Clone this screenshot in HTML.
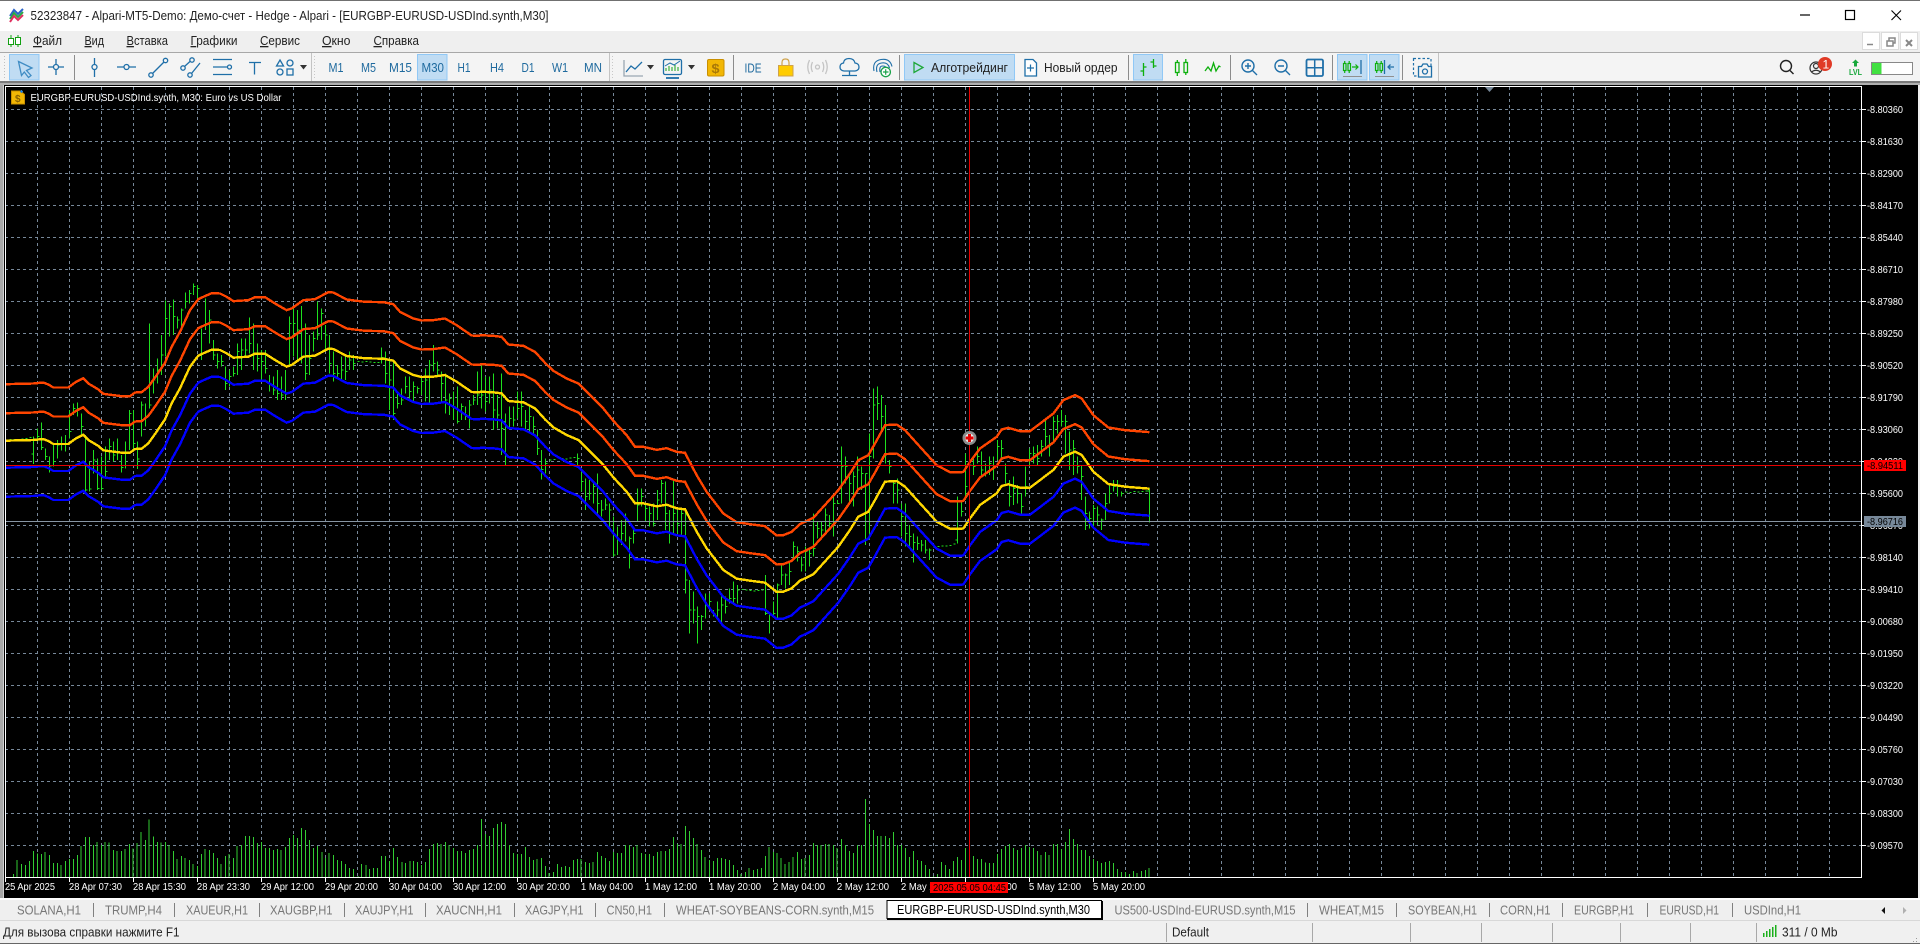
<!DOCTYPE html>
<html lang="ru"><head><meta charset="utf-8"><title>52323847 - Alpari-MT5-Demo</title>
<style>
html,body{margin:0;padding:0;background:#f0f0f0;overflow:hidden}
svg{display:block;font-family:"Liberation Sans","Noto Sans CJK JP",sans-serif}
.t{font-size:13px;fill:#222}
.g{font-size:13px;fill:#777}
.w{font-size:10px;fill:#fff}
.s{font-size:13px;fill:#1f6a9e}
.nv{vector-effect:non-scaling-stroke}
</style></head><body>
<svg width="1920" height="944" viewBox="0 0 1920 944" xmlns="http://www.w3.org/2000/svg">
<defs>
<pattern id="gv" patternUnits="userSpaceOnUse" x="5" y="87" width="32" height="6"><rect width="1" height="3" fill="#778899"/></pattern>
<pattern id="gh" patternUnits="userSpaceOnUse" x="5" y="109" width="6" height="32"><rect width="3" height="1" fill="#778899"/></pattern>
<g id="mid" fill="none" stroke-width="2.4" shape-rendering="crispEdges">
<path class="nv" transform="translate(0,260) scale(.33333)" d="M18 542L100 540L130 537L145 543L160 552L205 552L225 537L250 524L265 540L295 558L310 571L340 575L365 578L390 578L405 567L425 566L445 550L470 515L495 478L515 430L540 385L570 320L595 287L610 280L635 269L660 270L680 280L700 293L745 290L765 281L795 281L830 303L860 320L875 315L910 290L945 287L985 266L1000 267L1040 288L1095 295L1150 296L1180 302L1200 325L1240 345L1265 351L1300 350L1335 345L1370 365L1415 396L1440 397"/>
<path class="nv" transform="translate(480,340) scale(.33333)" d="M0 155L40 157L65 160L85 183L130 187L165 205L195 238L220 262L260 285L295 300L340 345L370 375L400 412L440 455L465 490L490 490L530 499L560 494L590 505L615 508L650 575L680 625L730 690L770 716L810 722L855 728L890 756L910 755L935 745L960 722L1000 703L1075 620L1110 570L1135 530L1165 515L1185 480L1215 425L1250 423L1275 440L1320 490L1370 545L1410 566L1440 566"/>
<path class="nv" transform="translate(800,360) scale(.33333)" d="M480 507L490 505L510 475L540 435L590 400L605 378L625 373L660 383L690 383L760 330L790 290L825 275L845 285L880 335L925 372L975 380L1048 386"/>
</g>
</defs>

<!-- window chrome -->
<rect width="1920" height="944" fill="#f0f0f0"/>
<rect width="1920" height="31" fill="#fff"/>
<rect width="1920" height="1" fill="#707070"/>
<rect y="31" width="1920" height="21" fill="#efefef"/>
<rect y="52" width="1920" height="1" fill="#a8a8a8"/>
<rect y="53" width="1920" height="28" fill="#f4f4f4"/>
<rect y="81" width="1920" height="2" fill="#7a7a7a"/>
<rect y="83" width="1920" height="2" fill="#b0b0b0"/>

<!-- app icon + title -->
<g fill="none" stroke-width="2">
<path d="M10 16L14 10L18 14L23 9" stroke="#2a62c8"/>
<path d="M10 19L14 13L18 17L23 12" stroke="#28a745"/>
<path d="M10 22L14 16L18 20L23 15" stroke="#e03060"/>
</g>
<text class="t" x="30.5" y="20" textLength="518" lengthAdjust="spacingAndGlyphs">52323847 - Alpari-MT5-Demo: Демо-счет - Hedge - Alpari - [EURGBP-EURUSD-USDInd.synth,M30]</text>
<path d="M1800 15h10" stroke="#000" stroke-width="1.2"/>
<rect x="1845.5" y="10.5" width="9" height="9" fill="none" stroke="#000" stroke-width="1.2"/>
<path d="M1891.5 10.5l9.5 9.5M1901 10.5l-9.5 9.5" stroke="#000" stroke-width="1.1"/>

<!-- menu -->
<g fill="none" stroke="#12a012"><path d="M11 35v12M18 35v12"/><rect x="8.5" y="38.5" width="5" height="6" fill="#fff"/><rect x="15.5" y="37.5" width="5" height="7" fill="#fff"/></g>
<text class="t" x="33" y="45" textLength="29" lengthAdjust="spacingAndGlyphs"><tspan text-decoration="underline">Ф</tspan>айл</text>
<text class="t" x="84.5" y="45" textLength="19.5" lengthAdjust="spacingAndGlyphs"><tspan text-decoration="underline">В</tspan>ид</text>
<text class="t" x="126.5" y="45" textLength="41.5" lengthAdjust="spacingAndGlyphs"><tspan text-decoration="underline">В</tspan>ставка</text>
<text class="t" x="190.5" y="45" textLength="47" lengthAdjust="spacingAndGlyphs"><tspan text-decoration="underline">Г</tspan>рафики</text>
<text class="t" x="260" y="45" textLength="40" lengthAdjust="spacingAndGlyphs"><tspan text-decoration="underline">С</tspan>ервис</text>
<text class="t" x="322" y="45" textLength="28.5" lengthAdjust="spacingAndGlyphs"><tspan text-decoration="underline">О</tspan>кно</text>
<text class="t" x="373.5" y="45" textLength="45.5" lengthAdjust="spacingAndGlyphs"><tspan text-decoration="underline">С</tspan>правка</text>
<!-- MDI buttons -->
<g fill="#fff" stroke="#dcdcdc"><rect x="1862.5" y="32.5" width="17" height="17"/><rect x="1881.5" y="32.5" width="17" height="17"/><rect x="1900.5" y="32.5" width="17" height="17"/></g>
<g fill="none" stroke="#888" stroke-width="1.5"><path d="M1867 44.5h6"/><rect x="1887" y="41" width="6" height="5"/><path d="M1889 41v-3h6v5h-2"/><path d="M1906 40l6 6M1912 40l-6 6" stroke-width="2"/></g>

<!-- toolbar separators -->
<g stroke="#8c8c8c"><path d="M74.5 55v25M733.5 55v25M899.5 55v25M1128.5 55v25M1230.5 55v25M1332.5 55v25M1402.5 55v25"/></g>
<g stroke="#c4c4c4"><path d="M311.5 53v28M609.5 53v28M1438.5 53v28"/></g>
<path d="M4.5 56v23" stroke="#c0c0c0" stroke-dasharray="1 2"/><path d="M314.5 56v23M612.5 56v23" stroke="#c8c8c8" stroke-dasharray="1 2"/>

<!-- selected buttons -->
<g fill="#c0dcf3" stroke="#90c8f6"><rect x="9.5" y="54.5" width="29.5" height="25.5"/><rect x="417.5" y="54.5" width="29.5" height="25.5"/><rect x="904.5" y="54.5" width="110" height="25.5"/><rect x="1133.5" y="54.5" width="29" height="25.5"/><rect x="1337.5" y="54.5" width="29.5" height="25.5"/><rect x="1369.5" y="54.5" width="29.5" height="25.5"/></g>

<!-- drawing tools -->
<g fill="none" stroke="#1f6fa8" stroke-width="1.3">
<path d="M18.5 61.5L32 68L26.5 70.5L31 75.5L28.5 77.5L24.3 72L21.5 75.5Z" stroke="#3f8cc4"/>
<path d="M48 67h5.5M58.5 67h5.5M56 59v5.5M56 69.5V75"/><circle cx="56" cy="67" r="2.5"/>
<path d="M94.5 58v6.5M94.5 69.5V77"/><circle cx="94.5" cy="67" r="2.5"/>
<path d="M117 67h7M129 67h7"/><circle cx="126.5" cy="67" r="2.5"/>
<path d="M152.5 73.5L164 62"/><circle cx="151" cy="75" r="2.2"/><circle cx="165.5" cy="60.5" r="2.2"/>
<path d="M184.5 66.5L190.5 61M191.5 73.5L200 63"/><circle cx="183" cy="68" r="2.2"/><circle cx="192" cy="60" r="2.2"/><circle cx="190" cy="75" r="2.2"/>
<path d="M213 59.5h19M213 67h14M213 74.5h19"/><circle cx="229.5" cy="67" r="2"/>
<path d="M249 62.5h12M254.5 62.5V74.5"/>
<path d="M280 60l3.5 6h-7z"/><circle cx="290" cy="63" r="3"/><circle cx="280" cy="72" r="3"/><rect x="287" y="69" width="6" height="6"/>
</g>
<path d="M300 65h7l-3.5 4.5zM647 65h7l-3.5 4.5zM688 65h7l-3.5 4.5z" fill="#333"/>

<!-- timeframes -->
<text class="s" x="328.5" y="72" textLength="15" lengthAdjust="spacingAndGlyphs">M1</text>
<text class="s" x="361" y="72" textLength="15" lengthAdjust="spacingAndGlyphs">M5</text>
<text class="s" x="389" y="72" textLength="23" lengthAdjust="spacingAndGlyphs">M15</text>
<text class="s" x="421.5" y="72" textLength="22.5" lengthAdjust="spacingAndGlyphs">M30</text>
<text class="s" x="457.5" y="72" textLength="13" lengthAdjust="spacingAndGlyphs">H1</text>
<text class="s" x="490" y="72" textLength="14" lengthAdjust="spacingAndGlyphs">H4</text>
<text class="s" x="521.5" y="72" textLength="13" lengthAdjust="spacingAndGlyphs">D1</text>
<text class="s" x="552" y="72" textLength="16" lengthAdjust="spacingAndGlyphs">W1</text>
<text class="s" x="584" y="72" textLength="18" lengthAdjust="spacingAndGlyphs">MN</text>

<!-- chart style icons -->
<g fill="none" stroke="#1f6fa8" stroke-width="1.3">
<path d="M624 60v16h19" stroke="#9aa7b2"/><path d="M626 72l5-6 4 3 7-7"/>
<rect x="663.5" y="59.5" width="18" height="15" rx="1.5"/><path d="M666 78h13" stroke-width="1.8"/>
</g>
<path d="M666 71v-3M669 71v-5M672 71v-4M675 71v-6M678 71v-4" stroke="#16a516"/><path d="M665 66l5-3 4 2 6-4" fill="none" stroke="#1f6fa8"/>
<rect x="707.5" y="59.5" width="16.5" height="16.5" rx="1.5" fill="#f2b705" stroke="#c98f00"/>
<text x="711.5" y="73" font-size="13" font-weight="bold" fill="#a87808" textLength="8" lengthAdjust="spacingAndGlyphs">$</text>
<text x="744.5" y="72.5" font-size="13" fill="#1f6a9e" textLength="17" lengthAdjust="spacingAndGlyphs">IDE</text>
<rect x="778.5" y="65.5" width="14.5" height="10.5" fill="#ffcc00" stroke="#cfa24a"/>
<path d="M782 65.5v-3q0-3.5 3.5-3.5t3.5 3.5v3" fill="none" stroke="#cfa24a" stroke-width="1.2"/>
<g fill="none" stroke="#c4c4c4" stroke-width="1.3"><circle cx="817.5" cy="67" r="2"/><path d="M812.5 62q-2.5 5 0 10M822.5 62q2.5 5 0 10M809.5 60q-3.5 7 0 14M825.5 60q3.5 7 0 14"/></g>
<g fill="none" stroke="#1f6fa8" stroke-width="1.3"><path d="M844 71h11q4-.5 4-4t-4-4q-1-4.5-6-4.5t-5.5 4.5q-3.500.5-3.500 4t4 4zM849.500 71v4M842 75.500h15"/></g>
<g fill="none" stroke="#1f6fa8" stroke-width="1.1"><path d="M874 71q-2-10 7-11.500t11 7M877 72q-2-8 4.500-9t8 5M880 72q-1-6 2.500-6t4 2.500"/></g>
<circle cx="885.7" cy="72" r="4.7" fill="#fff" stroke="#1aa34a" stroke-width="1.3"/><path d="M883 72h5.500M885.700 69.300v5.500" stroke="#1aa34a" stroke-width="1.2"/>
<path d="M914 62.5L923 67.5L914 72.5Z" fill="none" stroke="#1fa83a" stroke-width="1.3"/>
<text class="t" x="931" y="72" textLength="77" lengthAdjust="spacingAndGlyphs">Алготрейдинг</text>
<path d="M1025 59.5h8l3.5 3.5V76h-11.5z" fill="#fff" stroke="#1f6fa8" stroke-width="1.3"/><path d="M1027 68h7M1030.5 64.5v7" stroke="#1f6fa8" stroke-width="1.2"/>
<text class="t" x="1044" y="72" textLength="73.5" lengthAdjust="spacingAndGlyphs">Новый ордер</text>

<g fill="none" stroke="#0db00d" stroke-width="1.3">
<path d="M1143.5 63v13M1143.5 71h-3M1143.5 67h3M1153.5 59v9M1153.5 62h-3M1153.5 66h3"/>
<rect x="1175.5" y="62.5" width="3.5" height="10"/><path d="M1177.3 60v2.5M1177.3 72.5V76"/><rect x="1184" y="62.5" width="3.5" height="10"/><path d="M1185.8 59v3.5M1185.8 72.5V75"/>
<path d="M1205 71l3-4 3 4 2.5-8 2.5 8 3-5 1.5 1"/>
</g>
<g fill="none" stroke="#1f6fa8" stroke-width="1.4">
<circle cx="1248" cy="66" r="6"/><path d="M1252.5 70.5L1257 75M1245 66h6M1248 63v6"/>
<circle cx="1281" cy="66" r="6"/><path d="M1285.5 70.5L1290 75M1278 66h6"/>
<rect x="1306.5" y="59.5" width="16.5" height="16.5" rx="1.5" stroke-width="1.8"/><path d="M1306.5 67.7h16.5M1314.7 59.5V76" stroke-width="1.5"/>
</g>
<g fill="none" stroke="#0db00d" stroke-width="1.2">
<rect x="1343.5" y="63.5" width="2.5" height="7"/><path d="M1344.7 61v2.5M1344.7 70.5V73"/><rect x="1348" y="63.5" width="2.5" height="7"/><path d="M1349.2 61v2.5M1349.2 70.5V73"/><path d="M1352 67h6M1355.5 64.5L1358 67L1355.5 69.5"/>
<rect x="1375.5" y="63.5" width="2.5" height="7"/><path d="M1376.7 61v2.5M1376.7 70.5V73"/><rect x="1380" y="63.5" width="2.5" height="7"/><path d="M1381.2 61v2.5M1381.2 70.5V73"/>
</g>
<g fill="none" stroke="#1f6fa8" stroke-width="1.3"><path d="M1361 60v14M1384.5 60v14M1388 67h6M1390.5 64.5L1388 67L1390.5 69.5"/></g>
<path d="M1343 76.5h19M1375 76.5h19" stroke="#909090" stroke-width="1"/>
<rect x="1413.5" y="58.5" width="17.5" height="17.5" fill="none" stroke="#1f6fa8" stroke-dasharray="2.5 2" stroke-width="1.2"/>
<path d="M1418.5 66.5h3l1.500-2.500h4l1.500 2.500h3v10.500h-13z" fill="#f4f4f4" stroke="#1f6fa8" stroke-width="1.3"/><circle cx="1425" cy="71.5" r="2.5" fill="none" stroke="#1f6fa8" stroke-width="1.3"/>

<!-- right side icons -->
<g fill="none" stroke="#222" stroke-width="1.4"><circle cx="1786" cy="66" r="5.5"/><path d="M1790 70.5L1793.5 74"/></g>
<g fill="none" stroke="#333" stroke-width="1.2"><circle cx="1816" cy="68" r="6"/><circle cx="1816" cy="66" r="2.5"/><path d="M1811.5 72q4.5-3.5 9 0"/></g>
<circle cx="1825" cy="64" r="7" fill="#e03a26"/>
<text x="1822.5" y="68.5" font-size="12" fill="#fff">1</text>
<path d="M1855.5 59.5l3.5 3.5h-2v3.5h-3V63h-2z" fill="#18a83c"/>
<text x="1849" y="75" font-size="8.5" fill="#18a83c" font-weight="bold" textLength="13" lengthAdjust="spacingAndGlyphs">LVL</text>
<rect x="1871.5" y="62.5" width="41" height="12" fill="#fff" stroke="#888"/>
<rect x="1872" y="63" width="9.5" height="11" fill="#41e041"/>

<!-- chart -->
<rect x="0" y="85" width="3" height="813" fill="#a8a8a8"/>
<rect x="3" y="85" width="1" height="813" fill="#d0d0d0"/>
<rect x="4" y="85" width="1914" height="813" fill="#000"/>
<rect x="6" y="87" width="1855" height="790" fill="url(#gv)"/>
<rect x="6" y="87" width="1855" height="790" fill="url(#gh)"/>

<!-- volumes -->
<g fill="none" stroke="#32cd32" stroke-width="1" shape-rendering="crispEdges">
<path class="nv" transform="translate(0,780) scale(.38265,.33333)" d="M35 282V291M45 240V291M56 252V291M66 255V291M77 243V291M87 213V291M98 220V291M108 222V291M118 216V291M129 225V291M140 249V291M150 249V291M160 255V291M171 243V291M181 237V291M192 237V291M202 225V291M212 198V291M223 171V291M234 171V291M244 195V291M254 186V291M265 195V291M275 186V291M285 188V291M296 210V291M306 213V291M317 213V291M327 207V291M338 192V291M348 205V291M358 189V291M369 156V291M380 180V291M390 118V291M401 170V291M411 186V291M421 188V291M432 186V291M442 195V291M453 213V291M463 237V291M474 228V291M484 234V291M495 240V291M505 252V291M516 258V291M526 222V291M536 207V291M547 210V291M558 219V291M568 234V291M578 252V291M589 228V291M599 222V291M610 234V291M620 198V291M631 195V291M641 168V291M652 168V291M662 171V291M673 189V291M683 186V291M694 204V291M704 204V291M715 210V291M725 207V291M735 210V291M746 201V291M757 174V291M767 165V291M778 174V291M788 144V291M799 150V291M809 180V291M819 204V291M830 198V291M841 216V291M850 234V291M860 219V291M871 225V291M882 240V291M893 243V291M903 252V291M914 264V291M924 267V291M935 288V291M945 252V291M956 255V291M966 267V291M976 264V291M987 264V291M997 228V291M1007 228V291M1018 243V291M1028 204V291M1039 231V291M1050 246V291M1060 249V291M1071 243V291M1081 243V291M1091 246V291M1102 255V291M1112 246V291M1122 207V291M1133 192V291M1143 189V291M1153 192V291M1164 186V291M1174 195V291M1185 204V291M1195 213V291M1206 213V291M1217 219V291M1227 210V291M1238 207V291M1248 195V291M1258 117V291M1269 162V291M1279 168V291M1290 144V291M1300 132V291M1310 126V291M1321 132V291M1332 195V291M1342 219V291M1352 222V291M1363 222V291M1373 201V291M1384 231V291M1394 240V291M1404 237V291M1415 234V291M1425 258V291M1435 279V291M1446 276V291M1457 252V291M1467 261V291M1478 258V291M1488 261V291M1499 240V291M1509 237V291M1519 237V291M1530 246V291M1540 249V291M1550 246V291M1561 216V291"/>
<path class="nv" transform="translate(600,780) scale(.38265,.33333)" d="M4 228V291M14 234V291M25 243V291M35 216V291M46 219V291M56 219V291M66 195V291M77 195V291M87 201V291M97 195V291M108 219V291M119 222V291M129 222V291M140 228V291M150 216V291M160 213V291M171 213V291M181 207V291M192 171V291M202 192V291M212 192V291M223 138V291M234 153V291M244 174V291M254 192V291M265 210V291M275 231V291M286 240V291M296 243V291M307 234V291M317 234V291M328 237V291M338 240V291M349 255V291M359 270V291M369 282V291M380 276V291M390 264V291M401 270V291M411 267V291M422 264V291M432 228V291M442 201V291M453 216V291M463 219V291M473 234V291M484 252V291M494 246V291M505 231V291M516 216V291M526 237V291M536 234V291M547 225V291M558 189V291M568 195V291M578 195V291M589 192V291M599 192V291M610 195V291M620 204V291M631 177V291M641 195V291M652 213V291M662 219V291M673 195V291M683 195V291M694 57V291M704 132V291M715 150V291M725 168V291M735 168V291M746 168V291M757 174V291M767 156V291M778 195V291M788 195V291M799 204V291M809 231V291M819 213V291M830 240V291M840 243V291M850 255V291M861 267V291M871 288V291M882 282V291M893 246V291M903 255V291M913 267V291M924 243V291M934 231V291M945 240V291M955 204V291M966 210V291M976 228V291M987 237V291M997 237V291M1007 248V291M1018 249V291M1028 249V291M1039 222V291M1049 207V291M1060 198V291M1070 192V291M1081 204V291M1091 210V291M1102 204V291M1112 195V291M1122 201V291M1133 204V291M1143 213V291M1153 225V291M1164 216V291M1174 225V291M1185 192V291M1195 192V291M1206 207V291M1216 186V291M1227 147V291M1237 177V291M1248 192V291M1258 210V291M1269 210V291M1279 228V291M1290 237V291M1300 243V291M1310 249V291M1321 246V291M1331 243V291M1342 249V291M1352 267V291M1363 276V291M1373 276V291M1384 282V291M1394 273V291M1404 279V291M1415 273V291M1425 270V291M1435 264V291"/>
</g>

<!-- price bars -->
<g fill="none" stroke="#1ee01e" stroke-width="1" shape-rendering="crispEdges">
<path class="nv" transform="translate(0,260) scale(.33333)" d="M28 539h6M40 538h6M52 538h6M64 537h6M76 535h6M88 533h6M100 530V612m0-30h-6M112 505V545m0-15h6M124 487V570m0-8h6M136 565V600m0-10h6M148 590V638m0-20h6M160 555V620m0-15h6M172 540V595m0-40h6M184 530V572m0-18h6M196 525V575m0-25h6M208 450V535m0-20h6M220 430V465m0-20h6M232 428V470m0-25h6M244 460V530m0-30h6M256 525V700m0-10h6M268 605V695m0-8h6M280 570V640m0-40h6M292 595V690m0-5h6M304 590V690m0-5h6M316 560V650m0-15h6M328 535V600m0-40h6M340 545V605m0-20h6M352 535V600m0-25h6M364 585V637m0-15h6M376 545V625m0-8h6M388 450V570m0-110h6M400 450V565m0-15h6M412 545V627m0-30h6M424 425V530m0-95h6M436 430V500m0-30h6M448 190V445m0-10h6M460 325V400m0-40h6M472 295V370m0-40h6M484 225V345m0-60h6M496 122V290m0-115h6M508 130V230m0-90h6M520 118V225m0-55h6M532 170V205m0-25h6M544 145V200m0-50h6M556 98V145m0-20h6M568 90V130m0-30h6M580 70V105m0-25h6M592 75V115m0-30h6M604 205V300m0-20h6M616 115V210m0-20h6M628 150V250m0-70h6M640 240V300m0-15h6M652 280V325m0-20h6M664 285V320m0-15h6M676 320V390m0-20h6M688 330V380m0-30h6M700 320V350m0-10h6M712 250V345m0-70h6M724 235V330m0-60h6M736 235V290m0-20h6M748 172V280m0-30h6M760 190V330m0-50h6M772 250V335m0-40h6M784 270V360m0-55h6M796 270V340m0-15h6M808 345V395m0-25h6M820 350V405m0-15h6M832 330V420m0-20h6M844 350V420m0-15h6M856 330V420m0-20h6M868 170V320m0-130h6M880 145V290m0-100h6M892 150V300m0-90h6M904 138V310m0-100h6M916 190V360m0-20h6M928 225V345m0-50h6M940 215V275m0-40h6M952 125V240m0-15h6M964 145V240m0-80h6M976 195V275m0-50h6M988 225V340m0-30h6M1000 275V365m0-25h6M1012 315V355m0-15h6M1024 290V360m0-30h6M1036 290V360m0-25h6M1048 275V330m0-30h6M1060 285V330m0-20h6M1072 304h6M1084 306h6M1096 305h6M1108 306h6M1120 308h6M1132 307h6M1145 262V310m0-18h6M1157 275V370m0-30h6M1169 300V450m0-90h6M1181 300V480m0-20h6M1193 400V445m0-15h6M1205 385V435m0-15h6M1217 350V400m0-20h6M1229 350V415m0-20h6M1241 365V425m0-45h6M1253 380V400m0-15h6M1265 350V405m0-40h6M1277 325V425m0-65h6M1289 300V430m0-115h6M1301 255V335m0-25h6M1313 305V350m0-20h6M1325 335V430m0-60h6M1337 340V460m0-40h6M1349 400V465m0-50h6M1361 395V480m0-40h6M1373 380V490m0-5h6M1385 430V480m0-40h6M1397 440V480m0-10h6M1409 420V505m0-70h6M1421 405V435m0-15h6M1433 335V435m0-30h6"/>
<path class="nv" transform="translate(480,340) scale(.33333)" d="M5 75V205m0-40h6M17 110V215m0-30h6M29 110V190m0-40h6M41 100V270m0-60h6M53 165V265m0-40h6M65 100V345m0-80h6M77 220V375m0-130h-6M89 200V265m0-30h6M101 200V260m0-20h6M113 155V235m0-30h6M125 155V260m0-60h6M137 210V275m0-30h6M149 200V280m0-50h6M161 230V280m0-20h6M173 268V345m0-20h6M185 330V418m0-30h6M197 355V400m0-30h6M209 360h6M221 358h6M233 354h6M245 356h6M257 357h6M269 354h6M281 353h6M293 340V375m0-20h6M305 385V455m0-30h6M317 415V510m0-40h6M329 420V480m0-20h6M341 430V490m0-50h6M353 400V520m0-30h6M365 480V530m0-20h6M377 475V510m0-15h6M389 490V560m0-50h6M401 530V650m0-5h6M413 560V645m0-50h6M425 540V615m0-35h6M437 520V605m0-60h6M449 590V685m0-90h6M461 560V610m0-30h6M473 445V545m0-50h6M485 445V500m0-30h6M497 490V545m0-40h6M509 500V560m0-40h6M521 490V560m0-10h6M533 450V540m0-60h6M545 420V490m0-60h6M557 425V570m0-50h6M569 510V610m0-30h6M581 420V580m0-60h6M593 510V590m0-40h6M605 510V590m0-70h6M617 505V760m0-40h6M629 720V880m0-70h6M641 755V850m0-40h6M653 800V910m0-80h6M665 825V870m0-40h6M677 760V835m0-40h6M689 760V800m0-15h6M701 810V830m0-10h6M713 785V840m0-30h6M725 770V845m0-50h6M737 770V820m0-20h6M749 745V790m0-15h6M761 725V795m0-20h6M773 735V790m0-40h6M785 748h6M797 750h6M809 752h6M821 753h6M833 752h6M845 750h6M857 705V825m0-5h6M869 820V880m0-55h6M881 785V830m0-10h6M893 730V835m0-100h6M905 670V735m0-30h6M917 700V745m0-40h6M929 665V735m0-40h6M941 605V660m0-40h6M953 620V665m0-30h6M965 650V695m0-20h6M977 620V695m0-60h6M989 625V680m0-40h6M1001 520V650m0-25h6M1013 545V595m0-30h6M1025 545V590m0-20h6M1037 505V585m0-60h6M1049 525V570m0-20h6M1061 470V590m0-100h6M1073 480V490m0 0h6M1085 320V490m0-110h6M1097 350V430m0-50h6M1109 410V490m0-60h6M1121 395V500m0-90h6M1133 350V450m0-60h6M1145 380V450m0-50h6M1157 400V615m0-215h6M1169 280V600m0-250h6M1181 145V355m0-160h6M1193 140V240m0-50h6M1205 165V270m0-40h6M1217 195V370m0-30h6M1229 360V400m0-20h6M1241 420V490m0-60h6M1253 415V490m0-40h6M1265 490V590m0-60h6M1277 490V620m0-40h6M1289 555V620m0-30h6M1301 580V668m0-60h6M1313 590V630m0-20h6M1325 600V635m0-20h6M1337 600V640m0-10h6M1349 625V660m0-30h6M1361 622h6M1373 620h6M1385 618h6M1397 618h6M1409 616h6M1421 612h6"/>
<path class="nv" transform="translate(800,360) scale(.33333)" d="M472 410V550m0-10h-6M484 420V470m0-15h6M496 280V420m0-40h6M508 300V330m0-15h6M520 295V345m0-25h6M532 260V310m0-20h6M544 275V350m0-20h6M556 310V350m0-10h6M568 290V345m0-35h6M580 290V360m0-40h6M592 240V300m0-40h6M604 240V295m0-30h6M616 310V370m0-30h6M628 360V440m0-30h6M640 350V435m0-50h6M652 375V430m0-30h6M664 400V460m0-20h6M676 320V410m0-30h6M688 265V320m0-40h6M700 260V310m0-30h6M712 255V315m0-20h6M724 240V290m0-30h6M736 180V260m0-30h6M748 225V290m0-40h6M760 170V245m0-60h6M772 165V220m0-35h6M784 150V200m0-15h6M796 165V280m0-95h6M808 215V330m0-60h6M820 240V345m0-80h6M832 290V340m0-20h6M844 315V420m0-70h6M856 410V510m0-50h6M868 455V505m0-30h6M880 435V505m0-60h6M892 440V495m0-30h6M904 475V510m0-30h6M916 400V480m0-50h6M928 370V430m0-30h6M940 360V395m0-15h6M952 360V410m0-30h6M964 395V410m0-10h6M976 396h6M988 398h6M1000 395h6M1012 396h6M1024 394h6M1036 393h6M1048 385V488m0-95h-6"/>
</g>

<!-- bands -->
<use href="#mid" stroke="#ff4500" transform="translate(0,-56.5)"/>
<use href="#mid" stroke="#ff4500" transform="translate(0,-27.5)"/>
<use href="#mid" stroke="#ffd700"/>
<use href="#mid" stroke="#0000ff" transform="translate(0,27)"/>
<use href="#mid" stroke="#0000ff" transform="translate(0,56)"/>

<!-- price / crosshair lines -->
<rect x="6" y="465" width="1855" height="1" fill="#e60000"/>
<rect x="6" y="521" width="1855" height="1" fill="#8795a3"/>
<rect x="969" y="87" width="1" height="790" fill="#e60000"/>

<!-- cursor -->
<circle cx="969.5" cy="438" r="7" fill="#8c8c8c"/>
<circle cx="969.5" cy="438" r="4.5" fill="#e8e8e8"/>
<path d="M969.5 434v8M965.5 438h8" stroke="#e60000" stroke-width="3"/>

<!-- chart frame -->
<path d="M5.5 86.5H1861.5V877.5H5.5Z" fill="none" stroke="#fff"/>
<path d="M1485 87h9l-4.5 5z" fill="#778899"/>

<!-- chart title -->
<path d="M11.5 91h9l4 3.5V104h-13z" fill="#f2b705" stroke="#c98f00"/>
<text x="15" y="102" font-size="10" font-weight="bold" fill="#8a6200">$</text>
<path d="M20 91.5l3 0M21.5 90v3" stroke="#2a7fd0" stroke-width="1.2"/>
<text class="w" x="30.5" y="101" textLength="251" lengthAdjust="spacingAndGlyphs">EURGBP-EURUSD-USDInd.synth, M30:  Euro vs US Dollar</text>

<!-- price scale -->
<path d="M1861 109h5M1861 141h5M1861 173h5M1861 205h5M1861 237h5M1861 269h5M1861 301h5M1861 333h5M1861 365h5M1861 397h5M1861 429h5M1861 461h5M1861 493h5M1861 525h5M1861 557h5M1861 589h5M1861 621h5M1861 653h5M1861 685h5M1861 717h5M1861 749h5M1861 781h5M1861 813h5M1861 845h5" stroke="#fff" transform="translate(0,.5)"/>
<g class="w">
<text x="1867" y="113" textLength="36" lengthAdjust="spacingAndGlyphs">-8.80360</text>
<text x="1867" y="145" textLength="36" lengthAdjust="spacingAndGlyphs">-8.81630</text>
<text x="1867" y="177" textLength="36" lengthAdjust="spacingAndGlyphs">-8.82900</text>
<text x="1867" y="209" textLength="36" lengthAdjust="spacingAndGlyphs">-8.84170</text>
<text x="1867" y="241" textLength="36" lengthAdjust="spacingAndGlyphs">-8.85440</text>
<text x="1867" y="273" textLength="36" lengthAdjust="spacingAndGlyphs">-8.86710</text>
<text x="1867" y="305" textLength="36" lengthAdjust="spacingAndGlyphs">-8.87980</text>
<text x="1867" y="337" textLength="36" lengthAdjust="spacingAndGlyphs">-8.89250</text>
<text x="1867" y="369" textLength="36" lengthAdjust="spacingAndGlyphs">-8.90520</text>
<text x="1867" y="401" textLength="36" lengthAdjust="spacingAndGlyphs">-8.91790</text>
<text x="1867" y="433" textLength="36" lengthAdjust="spacingAndGlyphs">-8.93060</text>
<text x="1867" y="465" textLength="36" lengthAdjust="spacingAndGlyphs">-8.94330</text>
<text x="1867" y="497" textLength="36" lengthAdjust="spacingAndGlyphs">-8.95600</text>
<text x="1867" y="529" textLength="36" lengthAdjust="spacingAndGlyphs">-8.96870</text>
<text x="1867" y="561" textLength="36" lengthAdjust="spacingAndGlyphs">-8.98140</text>
<text x="1867" y="593" textLength="36" lengthAdjust="spacingAndGlyphs">-8.99410</text>
<text x="1867" y="625" textLength="36" lengthAdjust="spacingAndGlyphs">-9.00680</text>
<text x="1867" y="657" textLength="36" lengthAdjust="spacingAndGlyphs">-9.01950</text>
<text x="1867" y="689" textLength="36" lengthAdjust="spacingAndGlyphs">-9.03220</text>
<text x="1867" y="721" textLength="36" lengthAdjust="spacingAndGlyphs">-9.04490</text>
<text x="1867" y="753" textLength="36" lengthAdjust="spacingAndGlyphs">-9.05760</text>
<text x="1867" y="785" textLength="36" lengthAdjust="spacingAndGlyphs">-9.07030</text>
<text x="1867" y="817" textLength="36" lengthAdjust="spacingAndGlyphs">-9.08300</text>
<text x="1867" y="849" textLength="36" lengthAdjust="spacingAndGlyphs">-9.09570</text>
</g>
<rect x="1864" y="460" width="42" height="11" fill="#ff0000"/>
<text x="1867" y="469" font-size="10" fill="#000" textLength="36" lengthAdjust="spacingAndGlyphs">-8.94511</text>
<rect x="1864" y="516" width="42" height="11" fill="#778899"/>
<text x="1867" y="525" font-size="10" fill="#000" textLength="36" lengthAdjust="spacingAndGlyphs">-8.96716</text>

<!-- time scale -->
<path d="M5.5 877v5M69.5 877v5M133.5 877v5M197.5 877v5M261.5 877v5M325.5 877v5M389.5 877v5M453.5 877v5M517.5 877v5M581.5 877v5M645.5 877v5M709.5 877v5M773.5 877v5M837.5 877v5M901.5 877v5M965.5 877v5M1029.5 877v5M1093.5 877v5" stroke="#fff"/>
<g class="w">
<text x="5" y="890" textLength="50" lengthAdjust="spacingAndGlyphs">25 Apr 2025</text>
<text x="69" y="890" textLength="53" lengthAdjust="spacingAndGlyphs">28 Apr 07:30</text>
<text x="133" y="890" textLength="53" lengthAdjust="spacingAndGlyphs">28 Apr 15:30</text>
<text x="197" y="890" textLength="53" lengthAdjust="spacingAndGlyphs">28 Apr 23:30</text>
<text x="261" y="890" textLength="53" lengthAdjust="spacingAndGlyphs">29 Apr 12:00</text>
<text x="325" y="890" textLength="53" lengthAdjust="spacingAndGlyphs">29 Apr 20:00</text>
<text x="389" y="890" textLength="53" lengthAdjust="spacingAndGlyphs">30 Apr 04:00</text>
<text x="453" y="890" textLength="53" lengthAdjust="spacingAndGlyphs">30 Apr 12:00</text>
<text x="517" y="890" textLength="53" lengthAdjust="spacingAndGlyphs">30 Apr 20:00</text>
<text x="581" y="890" textLength="52" lengthAdjust="spacingAndGlyphs">1 May 04:00</text>
<text x="645" y="890" textLength="52" lengthAdjust="spacingAndGlyphs">1 May 12:00</text>
<text x="709" y="890" textLength="52" lengthAdjust="spacingAndGlyphs">1 May 20:00</text>
<text x="773" y="890" textLength="52" lengthAdjust="spacingAndGlyphs">2 May 04:00</text>
<text x="837" y="890" textLength="52" lengthAdjust="spacingAndGlyphs">2 May 12:00</text>
<text x="901" y="890" textLength="52" lengthAdjust="spacingAndGlyphs">2 May 20:00</text>
<text x="965" y="890" textLength="52" lengthAdjust="spacingAndGlyphs">5 May 04:00</text>
<text x="1029" y="890" textLength="52" lengthAdjust="spacingAndGlyphs">5 May 12:00</text>
<text x="1093" y="890" textLength="52" lengthAdjust="spacingAndGlyphs">5 May 20:00</text>
</g>
<rect x="930" y="882" width="78" height="11" fill="#ff0000"/>
<text x="933" y="891" font-size="10" fill="#000" textLength="73" lengthAdjust="spacingAndGlyphs">2025.05.05 04:45</text>

<!-- tabs -->
<rect y="898" width="1920" height="2" fill="#fff"/>
<rect y="900" width="1920" height="20" fill="#efefef"/>
<rect y="920" width="1920" height="1" fill="#d8d8d8"/>
<path d="M93.5 903v14M174.5 903v14M259.5 903v14M344.5 903v14M425.5 903v14M514.5 903v14M595.5 903v14M664.5 903v14M1307.5 903v14M1396.5 903v14M1489.5 903v14M1562.5 903v14M1647.5 903v14M1732.5 903v14" stroke="#808080"/>
<rect x="887" y="900.5" width="214.5" height="18" fill="#fff" stroke="#000"/>
<path d="M887 919.5H1102.5V901" fill="none" stroke="#000"/>
<text class="g" x="17" y="914.5" textLength="64" lengthAdjust="spacingAndGlyphs">SOLANA,H1</text>
<text class="g" x="105" y="914.5" textLength="57" lengthAdjust="spacingAndGlyphs">TRUMP,H4</text>
<text class="g" x="186" y="914.5" textLength="62" lengthAdjust="spacingAndGlyphs">XAUEUR,H1</text>
<text class="g" x="270" y="914.5" textLength="62.5" lengthAdjust="spacingAndGlyphs">XAUGBP,H1</text>
<text class="g" x="355" y="914.5" textLength="58.5" lengthAdjust="spacingAndGlyphs">XAUJPY,H1</text>
<text class="g" x="436" y="914.5" textLength="66" lengthAdjust="spacingAndGlyphs">XAUCNH,H1</text>
<text class="g" x="525" y="914.5" textLength="58.5" lengthAdjust="spacingAndGlyphs">XAGJPY,H1</text>
<text class="g" x="606.5" y="914.5" textLength="45.5" lengthAdjust="spacingAndGlyphs">CN50,H1</text>
<text class="g" x="676" y="914.5" textLength="198" lengthAdjust="spacingAndGlyphs">WHEAT-SOYBEANS-CORN.synth,M15</text>
<text x="897" y="914" font-size="13" fill="#000" textLength="193" lengthAdjust="spacingAndGlyphs">EURGBP-EURUSD-USDInd.synth,M30</text>
<text class="g" x="1114.5" y="914.5" textLength="181" lengthAdjust="spacingAndGlyphs">US500-USDInd-EURUSD.synth,M15</text>
<text class="g" x="1319" y="914.5" textLength="65" lengthAdjust="spacingAndGlyphs">WHEAT,M15</text>
<text class="g" x="1408" y="914.5" textLength="69" lengthAdjust="spacingAndGlyphs">SOYBEAN,H1</text>
<text class="g" x="1500" y="914.5" textLength="50.5" lengthAdjust="spacingAndGlyphs">CORN,H1</text>
<text class="g" x="1574" y="914.5" textLength="60" lengthAdjust="spacingAndGlyphs">EURGBP,H1</text>
<text class="g" x="1659.5" y="914.5" textLength="59.5" lengthAdjust="spacingAndGlyphs">EURUSD,H1</text>
<text class="g" x="1744" y="914.5" textLength="57" lengthAdjust="spacingAndGlyphs">USDInd,H1</text>
<path d="M1885 907v7l-3.5-3.5z" fill="#111"/><path d="M1903 907v7l3.5-3.5z" fill="#b0b0b0"/>

<!-- status bar -->
<rect y="943" width="1920" height="1" fill="#666"/>
<text class="t" x="3" y="936.5" textLength="176.5" lengthAdjust="spacingAndGlyphs">Для вызова справки нажмите F1</text>
<path d="M1166.5 923v19M1312.5 923v19M1410.5 923v19M1481.5 923v19M1552.5 923v19M1620.5 923v19M1690.5 923v19M1756.5 923v19" stroke="#a8a8a8"/>
<text class="t" x="1172" y="936.5" textLength="37" lengthAdjust="spacingAndGlyphs">Default</text>
<path d="M1763 933h1.5v4H1763zM1766 931h1.5v6H1766zM1769 929h1.5v8H1769zM1772 927h1.5v10H1772zM1775 925h1.5v12H1775z" fill="#1bb01b"/>
<text class="t" x="1782" y="936.5" textLength="55.5" lengthAdjust="spacingAndGlyphs">311 / 0 Mb</text>
<path d="M1916 941h1v1h-1zM1913 941h1v1h-1zM1916 938h1v1h-1z" fill="#999"/>
</svg>
</body></html>
